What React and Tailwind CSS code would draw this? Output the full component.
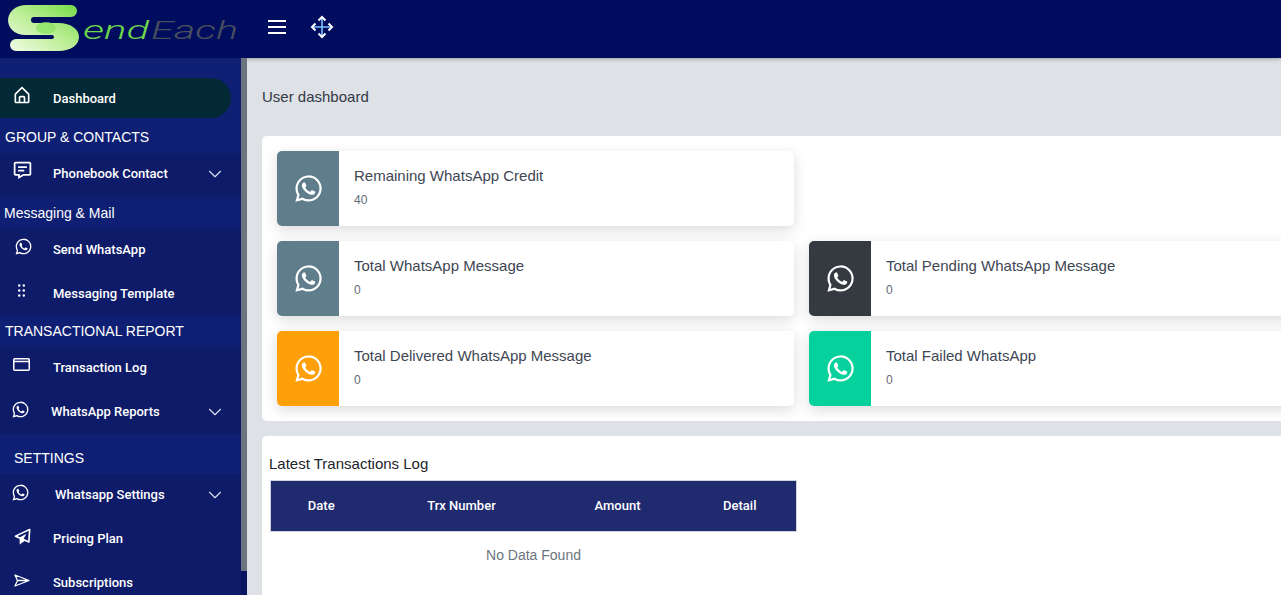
import { BiLogoWhatsapp, BiHomeAlt, BiMessageDetail, BiPaperPlane } from "react-icons/bi";
import { ChevronDown } from "lucide-react";

function MoveIcon() {
  return (
    <svg width="24" height="24" viewBox="0 0 24 24" fill="none">
      <path d="M12 3v18M3 12h18" stroke="#7cc4ff" strokeWidth="1.600" />
      <path
        d="M8.500 5.500 12 2l3.500 3.500M8.500 18.500 12 22l3.500-3.500M5.500 8.500 2 12l3.500 3.500M18.500 8.500 22 12l-3.500 3.500"
        stroke="#fff"
        strokeWidth="2"
      />
    </svg>
  );
}

function Logo() {
  const text = { fontFamily: "Roboto, sans-serif", fontStyle: "italic", fontWeight: 300, fontSize: 26, lengthAdjust: "spacingAndGlyphs" };
  return (
    <svg width="245" height="58" viewBox="0 0 245 58">
      <defs>
        <linearGradient id="s" x1="0" y1="1" x2="1" y2="0">
          <stop offset="0" stopColor="#f4fce8" />
          <stop offset="0.5" stopColor="#bcee96" />
          <stop offset="1" stopColor="#72dc45" />
        </linearGradient>
      </defs>
      <path
        d="M27 5H71a6 6 0 0 1 0 12H34a3 3 0 0 0 0 6H58c28 0 28 28 0 28H16a6 6 0 0 1 0-12H52a2 2 0 0 0 0-4H26C2 35 2 5 27 5Z"
        fill="url(#s)"
      />
      <ellipse cx="46" cy="28" rx="10" ry="6" fill="#8ee268" opacity="0.8" />
      <text x="83" y="39" textLength="66" fill="#6fd84a" {...text}>
        end
      </text>
      <text x="151" y="39" textLength="87" fill="#4a4f5e" {...text}>
        Each
      </text>
    </svg>
  );
}

function CardIcon({ className }) {
  return (
    <svg width="17" height="13" viewBox="0 0 17 13" fill="none" stroke="currentColor" className={className}>
      <rect x="0.750" y="0.750" width="15.500" height="11.500" rx="1" strokeWidth="1.500" />
      <path d="M1 3.500h15" strokeWidth="1.500" />
    </svg>
  );
}

function DotsIcon({ className }) {
  return (
    <svg width="7" height="13" viewBox="0 0 7 13" fill="currentColor" className={className}>
      <circle cx="1.200" cy="1.500" r="1.200" />
      <circle cx="5.800" cy="1.500" r="1.200" />
      <circle cx="1.200" cy="6.500" r="1.200" />
      <circle cx="5.800" cy="6.500" r="1.200" />
      <circle cx="1.200" cy="11.500" r="1.200" />
      <circle cx="5.800" cy="11.500" r="1.200" />
    </svg>
  );
}

function SendIcon({ className }) {
  return (
    <svg width="16" height="13" viewBox="0 0 16 13" fill="none" stroke="currentColor" strokeWidth="1.300" className={className}>
      <path d="M1 1 15 6.500 1 12l2.500-5.500ZM3.500 6.500H15" strokeLinejoin="round" />
    </svg>
  );
}

function SectionTitle({ children, className }) {
  return (
    <div className={`flex items-center bg-[#0e1f74] font-['Liberation_Sans',sans-serif] text-[14px] text-white ${className}`}>
      {children}
    </div>
  );
}

function NavItem({ icon, label, chevron, className, iconBox = "w-[40px] pl-[14px]", labelClass = "ml-[13px]" }) {
  return (
    <div className={`flex items-center text-[13px] font-medium text-white ${className}`}>
      <span className={`flex -translate-y-[3px] items-center ${iconBox}`}>{icon}</span>
      <span className={labelClass}>{label}</span>
      {chevron && <ChevronDown size={22} strokeWidth={1.200} className="ml-auto mr-[15px] text-[#dfe3f5]" />}
    </div>
  );
}

function Sidebar() {
  const wa = <BiLogoWhatsapp className="-ml-[1px] text-[21px]" />;
  return (
    <aside className="relative w-[247px] shrink-0 overflow-hidden bg-[#0a1562]">
      <div className="h-[537px] w-[241px] bg-[#0e1b69]">
        <div className="h-[63px] bg-[#0f1f73] pt-[20px]">
          <div className="flex h-[40px] w-[231px] items-center rounded-r-[20px] bg-[#032836] text-[13px] font-medium text-white">
            <BiHomeAlt className="ml-[12px] -translate-y-[3px] text-[20px]" />
            <span className="ml-[21px] translate-y-[1px]">Dashboard</span>
          </div>
        </div>
        <SectionTitle className="h-[32px] pl-[5px] pt-[1px]">GROUP &amp; CONTACTS</SectionTitle>
        <NavItem icon={<BiMessageDetail className="-ml-[2px] text-[21px]" />} label="Phonebook Contact" chevron className="h-[44px] pb-[3px]" />
        <SectionTitle className="h-[32px] pl-[4px]">Messaging &amp; Mail</SectionTitle>
        <NavItem icon={wa} label="Send WhatsApp" className="h-[43px] pb-[2px]" />
        <NavItem icon={<DotsIcon className="ml-[4px]" />} label="Messaging Template" className="h-[44px] pb-[1px]" />
        <SectionTitle className="h-[31px] pl-[5px]">TRANSACTIONAL REPORT</SectionTitle>
        <NavItem icon={<CardIcon className="-ml-[1px]" />} label="Transaction Log" className="h-[43px] pb-[2px]" />
        <NavItem icon={wa} label="WhatsApp Reports" chevron iconBox="w-[38px] pl-[11px]" className="h-[44px]" />
        <SectionTitle className="h-[40px] pl-[14px] pt-[8px]">SETTINGS</SectionTitle>
        <NavItem icon={wa} label="Whatsapp Settings" chevron iconBox="w-[38px] pl-[11px]" labelClass="ml-[17px]" className="h-[42px]" />
        <NavItem icon={<BiPaperPlane className="-ml-[1px] text-[20px]" />} label="Pricing Plan" className="h-[44px] pt-[2px]" />
        <NavItem icon={<SendIcon />} label="Subscriptions" className="h-[44px] pt-[2px]" />
      </div>
      <div className="absolute right-0 top-0 h-[513px] w-[6px] bg-[#6c757d]" />
    </aside>
  );
}

function StatCard({ title, value, color }) {
  return (
    <div className="flex h-[75px] w-[517px] overflow-hidden rounded-[5px] bg-white shadow-[0_4px_14px_rgba(0,0,0,0.14)]">
      <div className={`flex w-[62px] items-center justify-center text-white ${color}`}>
        <BiLogoWhatsapp className="text-[35px]" />
      </div>
      <div className="pl-[15px] pt-[15px]">
        <div className="text-[15px] leading-[20px] text-[#404654]">{title}</div>
        <div className="mt-[5px] text-[12px] leading-[18px] text-[#636b75]">{value}</div>
      </div>
    </div>
  );
}

export default function App() {
  return (
    <div className="flex h-[595px] w-[1281px] flex-col overflow-hidden bg-[#dee1e6] font-['Roboto',sans-serif]">
      <header className="flex h-[58px] shrink-0 items-center bg-[#000d5e] shadow-[0_1px_4px_rgba(0,0,0,0.3)]">
        <Logo />
        <div className="-mt-[4px] ml-[23px] flex w-[18px] flex-col gap-[4px]">
          <span className="h-[2px] bg-white" />
          <span className="h-[2px] bg-white" />
          <span className="h-[2px] bg-white" />
        </div>
        <div className="-mt-[4px] ml-[24px]">
          <MoveIcon />
        </div>
      </header>
      <div className="flex min-h-0 flex-1">
        <Sidebar />
        <main className="w-[1100px] shrink-0 pl-[15px] font-['Liberation_Sans',sans-serif]">
          <h1 className="pt-[30px] text-[15px] leading-[18px] text-[#333a47]">User dashboard</h1>
          <section className="mt-[30px] w-[1100px] rounded-[5px] bg-white p-[15px]">
            <div className="grid grid-cols-[517px_517px] gap-[15px]">
              <StatCard title="Remaining WhatsApp Credit" value="40" color="bg-[#607d8b]" />
              <div />
              <StatCard title="Total WhatsApp Message" value="0" color="bg-[#607d8b]" />
              <StatCard title="Total Pending WhatsApp Message" value="0" color="bg-[#343a40]" />
              <StatCard title="Total Delivered WhatsApp Message" value="0" color="bg-[#ff9f0a]" />
              <StatCard title="Total Failed WhatsApp" value="0" color="bg-[#06d19c]" />
            </div>
          </section>
          <section className="mt-[15px] h-[200px] w-[1100px] rounded-[5px] bg-white pl-[8px] pt-[19px]">
            <h2 className="-ml-[1px] text-[15px] leading-[18px] text-[#212529]">Latest Transactions Log</h2>
            <table className="mt-[7px] w-[527px] table-fixed border-collapse">
              <thead>
                <tr className="h-[51px] border border-[#cfd3da] bg-[#202a6e] font-['Roboto',sans-serif] text-[13px] text-white">
                  <th className="w-[101px] font-medium">Date</th>
                  <th className="w-[180px] font-medium">Trx Number</th>
                  <th className="w-[132px] font-medium">Amount</th>
                  <th className="font-medium">Detail</th>
                </tr>
              </thead>
              <tbody>
                <tr>
                  <td colSpan={4} className="pt-[14px] text-center text-[14px] leading-[18px] text-[#6c757d]">
                    No Data Found
                  </td>
                </tr>
              </tbody>
            </table>
          </section>
        </main>
      </div>
    </div>
  );
}
